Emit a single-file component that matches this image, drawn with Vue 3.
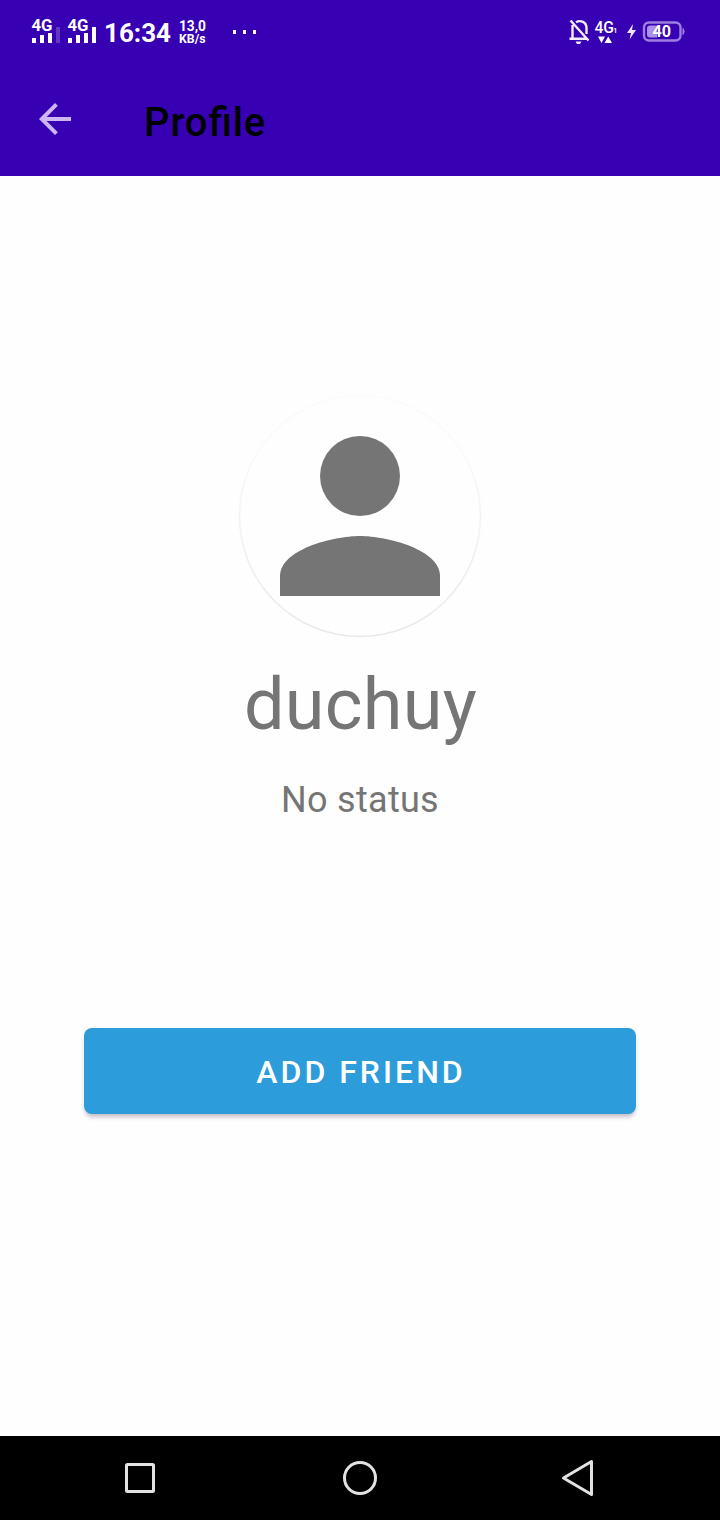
<script setup>
const title = 'Profile'
const user = { name: 'duchuy', status: 'No status' }
</script>

<template>
  <div class="screen">
    <header class="top">
      <div class="status-bar">
        <svg class="status-left" width="270" height="64" viewBox="0 0 270 64">
          <g fill="#fff">
            <text x="31.500" y="31" font-size="17" font-weight="700" textLength="21" lengthAdjust="spacingAndGlyphs">4G</text>
            <path d="M32 38h4v5h-4zM40 35h4v8h-4zM48 33h4v10h-4z" />
            <path d="M56 27h4v16h-4z" opacity=".22" />
            <text x="67.500" y="31" font-size="17" font-weight="700" textLength="21" lengthAdjust="spacingAndGlyphs">4G</text>
            <path d="M68 38h4v5h-4zM76 35h4v8h-4zM84 33h4v10h-4zM92 27h4v16h-4z" />
            <text x="104" y="42" font-size="26" font-weight="700" textLength="67" lengthAdjust="spacingAndGlyphs">16:34</text>
            <text x="179" y="31" font-size="14" font-weight="700" textLength="27" lengthAdjust="spacingAndGlyphs">13,0</text>
            <text x="179" y="43" font-size="12" font-weight="700" textLength="26.500" lengthAdjust="spacingAndGlyphs">KB/s</text>
            <path d="M233 30h3v4h-3zM243 30h3v4h-3zM253 30h3v4h-3z" />
          </g>
        </svg>
        <svg class="status-right" width="160" height="64" viewBox="560 0 160 64">
          <g fill="none" stroke="#f4ebff" stroke-width="2.400">
            <path d="M572.500 25V38M576 22.300C580.500 19.500 586.500 22 586.500 28V34M569.500 38.800H587M570.500 20.500L588.500 40.500" />
          </g>
          <path d="M575.500 41.500h6l-1.500 2.500h-3z" fill="#f4ebff" />
          <text x="594.500" y="33" font-size="17" font-weight="500" fill="#fff" textLength="19.500" lengthAdjust="spacingAndGlyphs">4G</text>
          <text x="613" y="33" font-size="8" font-weight="500" fill="#fff">1</text>
          <path d="M598 36.500h7l-3.500 6.500zM604.500 43h7.500l-3.750-6.500z" fill="#fff" />
          <path d="M633 24L627 33H631L629.500 39.500L636 30H632Z" fill="#eee2ff" />
          <rect x="644" y="22.500" width="36.500" height="18" rx="5" fill="none" stroke="#9e7fe0" stroke-width="2.400" />
          <path d="M650 25.500h7v12h-7a3 3 0 0 1-3-3v-6a3 3 0 0 1 3-3z" fill="#ab90e5" />
          <path d="M683 28.500q2.500 3 0 6z" fill="#9e7fe0" stroke="#9e7fe0" />
          <text x="652.500" y="37" font-size="16" font-weight="700" fill="#fff" textLength="18.500" lengthAdjust="spacingAndGlyphs">40</text>
        </svg>
      </div>
      <div class="app-bar">
        <svg class="back" width="48" height="48" viewBox="0 0 24 24">
          <path d="M20 11H7.830l5.590-5.590L12 4l-8 8 8 8 1.410-1.410L7.830 13H20v-2z" fill="#d0b5f5" />
        </svg>
        <h1 class="title">{{ title }}</h1>
      </div>
    </header>

    <main class="content">
      <svg class="avatar" width="244" height="244" viewBox="0 0 244 244">
        <defs>
          <linearGradient id="ring" x1="0" y1="0" x2="0" y2="1">
            <stop offset="0" stop-color="#fbfbfb" />
            <stop offset=".2" stop-color="#fafafa" />
            <stop offset=".5" stop-color="#f3f3f3" />
            <stop offset="1" stop-color="#e8e8e8" />
          </linearGradient>
        </defs>
        <circle cx="122" cy="122" r="120.500" fill="#fefefe" stroke="url(#ring)" stroke-width="1.500" />
        <circle cx="122" cy="82" r="40" fill="#757575" />
        <path d="M122 142C95.300 142 42 155.400 42 182V202H202V182C202 155.400 148.700 142 122 142Z" fill="#757575" />
      </svg>
      <div class="name">{{ user.name }}</div>
      <div class="status">{{ user.status }}</div>
      <button class="add">ADD FRIEND</button>
    </main>

    <nav class="nav-bar">
      <svg width="40" height="40" viewBox="0 0 40 40">
        <rect x="6.500" y="6.500" width="27" height="27" rx="1" />
      </svg>
      <svg width="40" height="40" viewBox="0 0 40 40">
        <circle cx="20" cy="20" r="15.500" />
      </svg>
      <svg width="40" height="40" viewBox="0 0 40 40">
        <path d="M3.500 20L31.500 3.500V36.500Z" stroke-linejoin="round" />
      </svg>
    </nav>
  </div>
</template>

<style scoped>
.screen {
  width: 720px;
  height: 1520px;
  display: flex;
  flex-direction: column;
  background: #fefefe;
  font-family: Roboto, "Liberation Sans", sans-serif;
}
.top {
  height: 176px;
  background: #3700b3;
}
.status-bar {
  height: 64px;
  display: flex;
  justify-content: space-between;
}
.app-bar {
  height: 112px;
  display: flex;
  align-items: center;
  padding-left: 31px;
}
.back {
  margin-bottom: 2px;
}
.title {
  margin: 6px 0 0 65px;
  font-size: 40px;
  line-height: 48px;
  font-weight: 500;
  letter-spacing: 0.850px;
  font-feature-settings: "liga" 1;
  color: #000;
}
.content {
  flex: 1;
  display: flex;
  flex-direction: column;
  align-items: center;
  padding-top: 218px;
}
.avatar {
  display: block;
}
.name {
  margin: 25px 0 0 1px;
  font-size: 72px;
  line-height: 84px;
  letter-spacing: 0.300px;
  color: #757575;
}
.status {
  margin-top: 32px;
  font-size: 36px;
  line-height: 42px;
  letter-spacing: 0.300px;
  color: #757575;
}
.add {
  margin-top: 207px;
  width: 552px;
  height: 86px;
  padding: 1px 0 0 2px;
  border: 0;
  border-radius: 8px;
  background: #2c9cdb;
  box-shadow: 0 4px 4px -1px rgba(70, 40, 80, 0.3);
  color: #fff;
  font-family: inherit;
  font-size: 32px;
  font-weight: 500;
  letter-spacing: 3px;
}
.nav-bar {
  height: 84px;
  display: flex;
  align-items: center;
  justify-content: space-between;
  padding: 0 120px;
  box-sizing: border-box;
  background: #000;
}
.nav-bar svg {
  fill: none;
  stroke: #e2e2e2;
  stroke-width: 3px;
}
</style>
